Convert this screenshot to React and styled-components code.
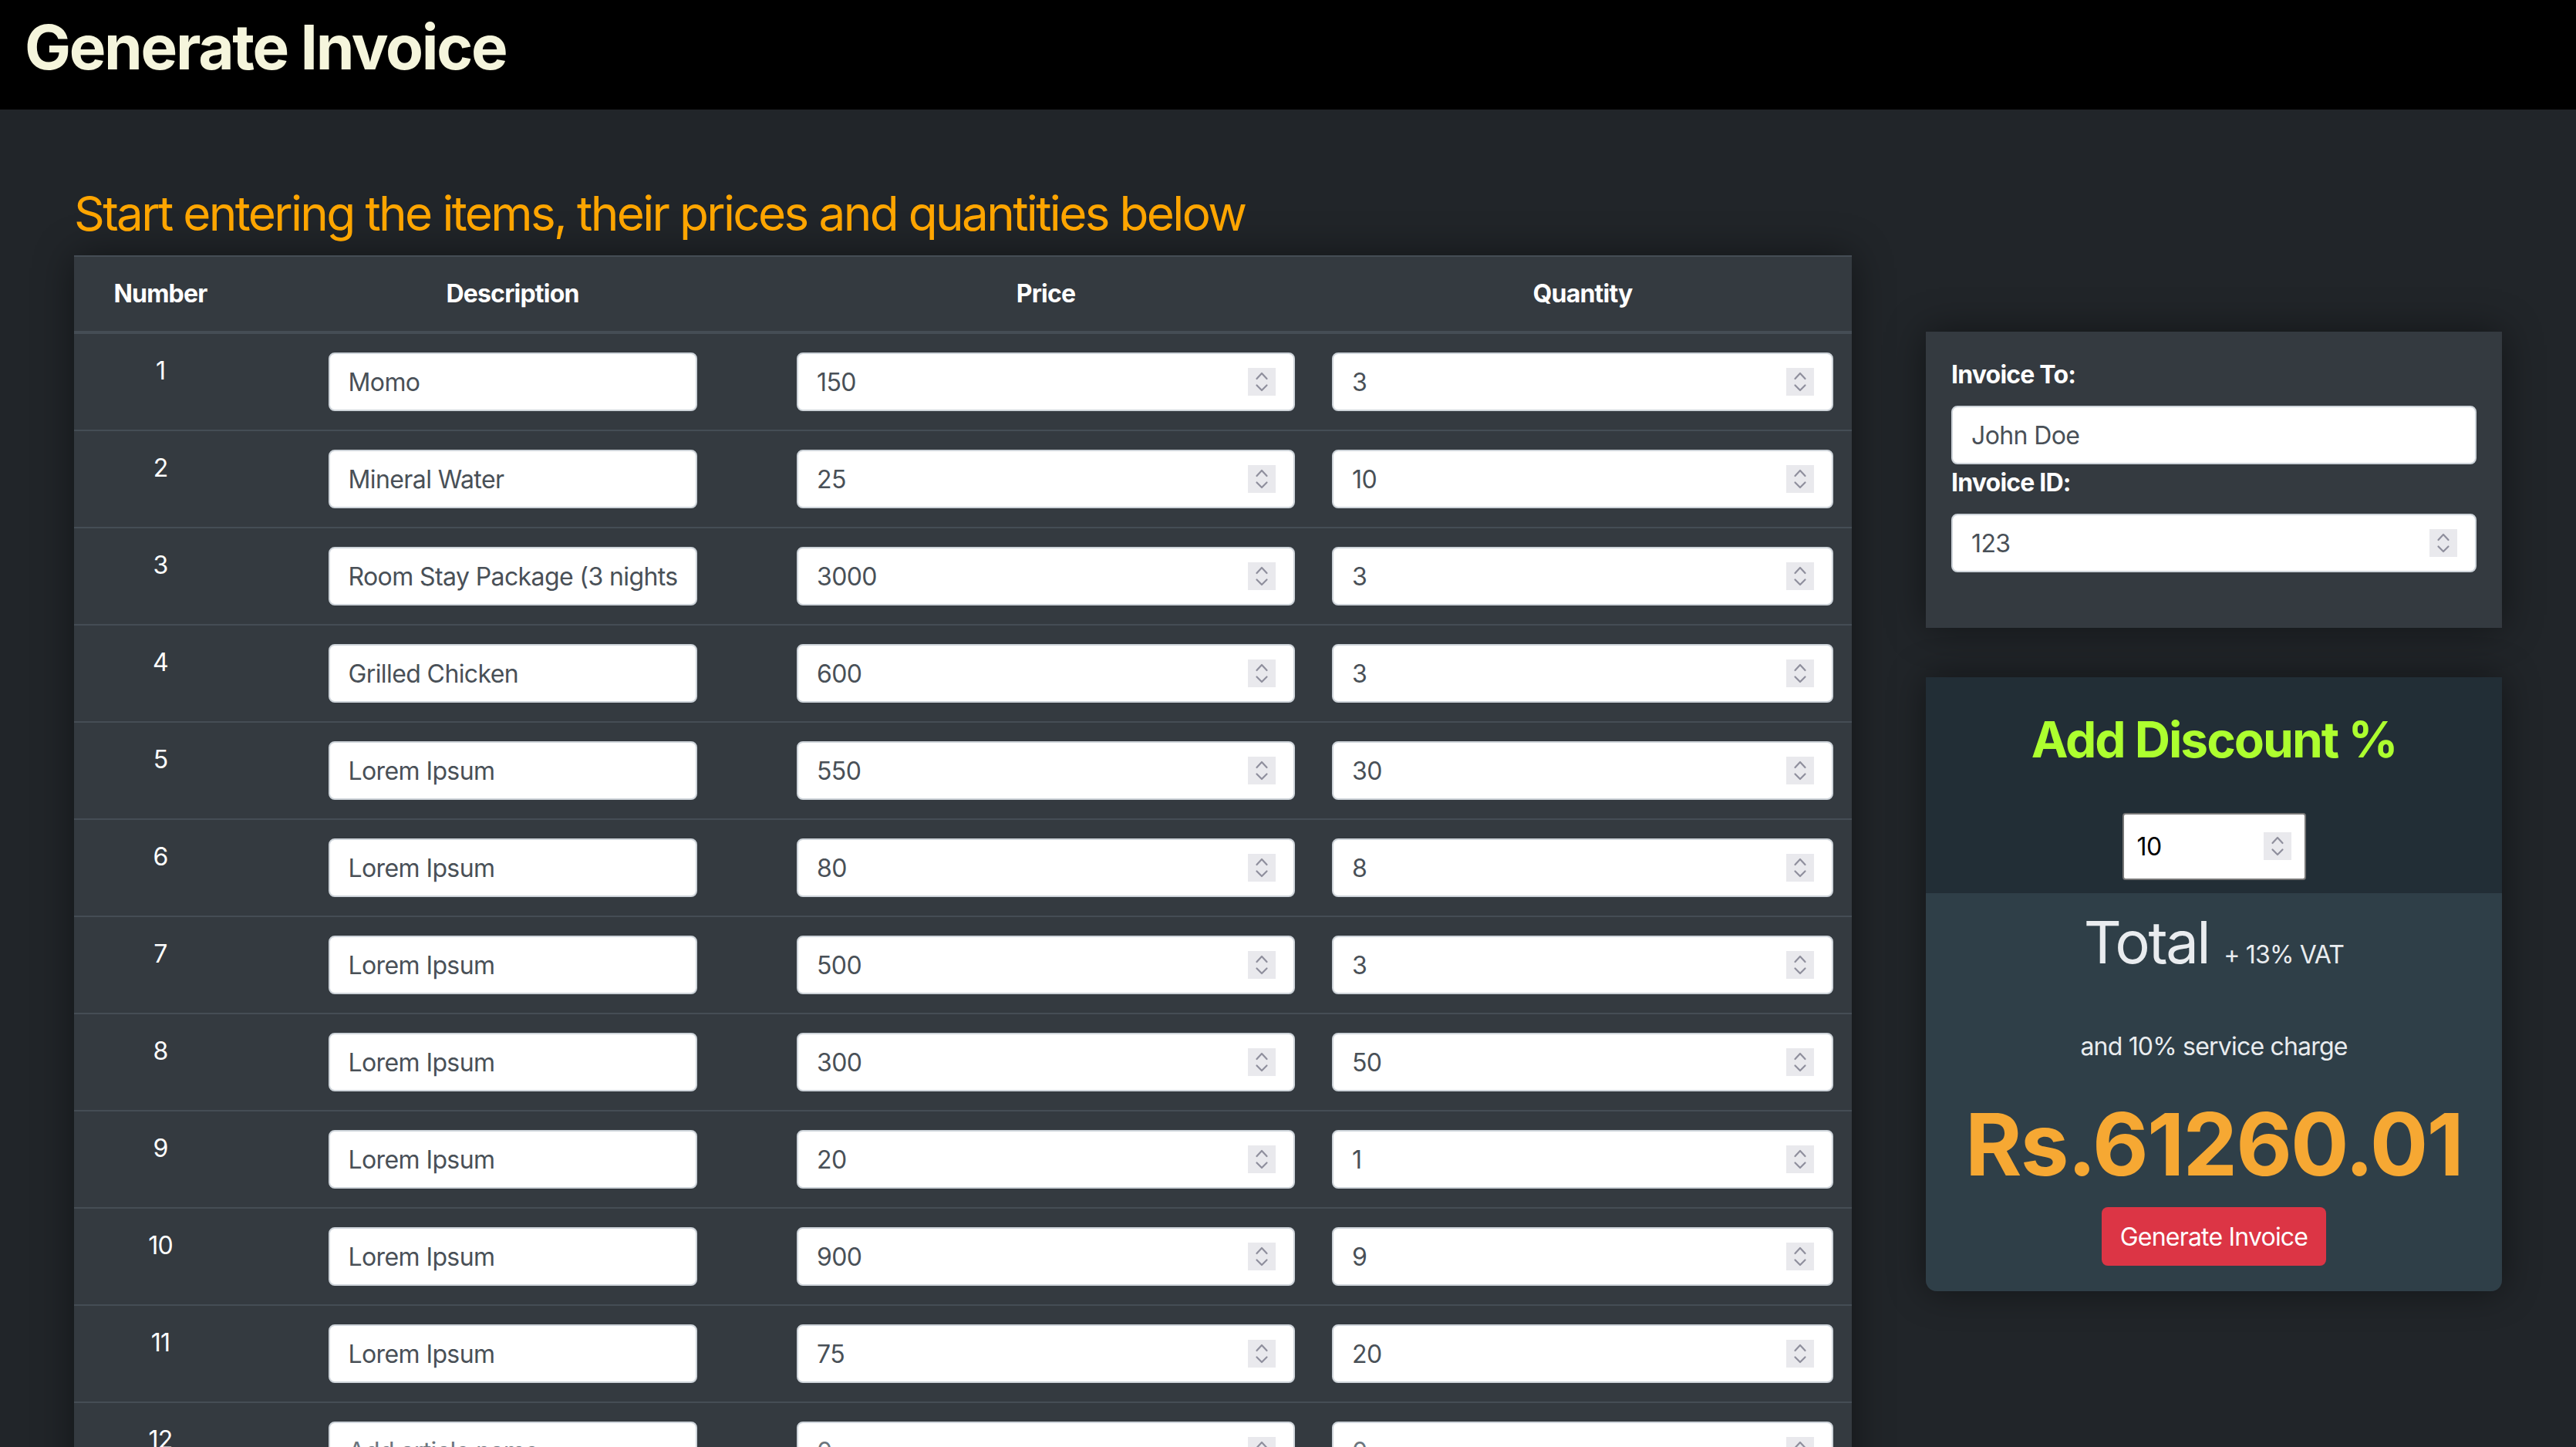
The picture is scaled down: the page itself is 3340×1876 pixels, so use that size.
import React from 'react'
import styled, { createGlobalStyle } from 'styled-components';

const GlobalStyle = createGlobalStyle`
  body {
    margin : 0;
    background : #212529;
    font-family : Inter, "Noto Sans", sans-serif;
    color : #fff;
    letter-spacing : -0.8px;
  }
`;

const items = [
  { id: 1, name: 'Momo', price: '150', qty: '3' },
  { id: 2, name: 'Mineral Water', price: '25', qty: '10' },
  { id: 3, name: 'Room Stay Package (3 nights)', price: '3000', qty: '3' },
  { id: 4, name: 'Grilled Chicken', price: '600', qty: '3' },
  { id: 5, name: 'Lorem Ipsum', price: '550', qty: '30' },
  { id: 6, name: 'Lorem Ipsum', price: '80', qty: '8' },
  { id: 7, name: 'Lorem Ipsum', price: '500', qty: '3' },
  { id: 8, name: 'Lorem Ipsum', price: '300', qty: '50' },
  { id: 9, name: 'Lorem Ipsum', price: '20', qty: '1' },
  { id: 10, name: 'Lorem Ipsum', price: '900', qty: '9' },
  { id: 11, name: 'Lorem Ipsum', price: '75', qty: '20' },
  { id: 12, name: '', price: '', qty: '' },
];

const Header = styled.header`
  background : #000;
  height : 142px;
  box-sizing : border-box;
  padding : 13px 32px 0;
`;

const Title = styled.h1`
  margin : 0;
  font-size : 80px;
  line-height : 1.2;
  font-weight : 700;
  color : #f5f5dc;
  letter-spacing : -2.3px;
`;

const Main = styled.main`
  display : flex;
  align-items : flex-start;
  gap : 96px;
  padding : 0 96px;
`;

const LeftCol = styled.section`
  flex : 0 0 2305px;
`;

const Subtitle = styled.h2`
  margin : 97px 0 16px;
  font-size : 62px;
  line-height : 76px;
  font-weight : 400;
  color : #ffa500;
  letter-spacing : -2.65px;
`;

const Table = styled.div`
  background : #343a40;
  border-top : 2px solid #454d55;
  box-shadow : 0 0 48px rgba(0, 0, 0, 0.45);
`;

const Row = styled.div`
  display : grid;
  grid-template-columns : 224px 689px 694px 698px;
  border-top : ${p => (p.$first ? 'none' : '2px solid #454d55')};
  border-bottom : ${p => (p.$head ? '4px solid #454d55' : 'none')};
`;

const Th = styled.div`
  padding : 24px;
  font-size : 32px;
  line-height : 48px;
  font-weight : 700;
  text-align : center;
`;

const Td = styled.div`
  padding : 24px;
  font-size : 32px;
  line-height : 48px;
  text-align : center;
  display : flex;
  justify-content : center;
  align-items : flex-start;
`;

const Field = styled.label`
  display : flex;
  align-items : center;
  box-sizing : border-box;
  width : ${p => p.$width || '100%'};
  height : 76px;
  background : #fff;
  border : 2px solid #ced4da;
  border-radius : 8px;
  padding : 0 ${p => (p.$spin ? '23px' : '24px')} 0 24px;
`;

const Input = styled.input`
  flex : 1;
  min-width : 0;
  border : none;
  outline : none;
  background : transparent;
  padding : 0;
  font-family : inherit;
  font-size : 32px;
  letter-spacing : -0.6px;
  color : ${p => p.$color || '#495057'};

  &::placeholder {
    color : #6c757d;
  }
`;

const SpinBox = styled.span`
  flex : 0 0 36px;
  height : 36px;
  background : #e9e9ed;
  display : block;
`;

const Spinner = () => (
  <SpinBox>
    <svg width="36" height="36" viewBox="0 0 36 36" fill="none" stroke="#8f8f9d" strokeWidth="2.2" strokeLinecap="round" strokeLinejoin="round">
      <polyline points="11.5,14 18,7 24.5,14" />
      <polyline points="11.5,22.5 18,29 24.5,22.5" />
    </svg>
  </SpinBox>
);

const RightCol = styled.aside`
  flex : 0 0 747px;
  display : flex;
  flex-direction : column;
  gap : 64px;
  padding-top : 288px;
`;

const InfoCard = styled.div`
  background : #343a40;
  padding : 32px 33px 72px;
  box-shadow : 0 0 48px rgba(0, 0, 0, 0.45);
`;

const Label = styled.div`
  font-size : 32px;
  line-height : 48px;
  font-weight : 700;
  margin-bottom : 16px;
`;

const TotalCard = styled.div`
  border-radius : 0 0 14px 14px;
  overflow : hidden;
  box-shadow : 0 0 48px rgba(0, 0, 0, 0.45);
`;

const DiscountPart = styled.div`
  background : #222e36;
  padding : 43px 0 17px;
  display : flex;
  flex-direction : column;
  align-items : center;
`;

const DiscountTitle = styled.h2`
  margin : 0 0 56px;
  font-size : 64px;
  line-height : 1.2;
  font-weight : 700;
  color : #adff2f;
  letter-spacing : -2px;
`;

const DiscountField = styled.label`
  display : flex;
  align-items : center;
  box-sizing : border-box;
  width : 238px;
  height : 87px;
  background : #fff;
  border : 2px solid #767676;
  border-radius : 4px;
  padding : 0 17px;
`;

const SumPart = styled.div`
  background : #2f3f48;
  padding : 15px 0 33px;
  display : flex;
  flex-direction : column;
  align-items : center;
  color : #e9ecef;
`;

const TotalLine = styled.div`
  font-size : 76px;
  line-height : 96px;
  letter-spacing : -2.5px;
`;

const Small = styled.span`
  font-size : 32px;
  letter-spacing : -0.8px;
`;

const Note = styled.p`
  margin : 47px 0 0;
  font-size : 32px;
  line-height : 48px;
`;

const Amount = styled.div`
  margin-top : 35px;
  font-size : 112px;
  line-height : 1.2;
  font-weight : 700;
  color : #f6a833;
  letter-spacing : -1.8px;
`;

const Button = styled.button`
  margin-top : 15px;
  height : 76px;
  padding : 0 24px;
  border : none;
  border-radius : 8px;
  background : #dc3545;
  color : #fff;
  font-family : inherit;
  font-size : 32px;
  letter-spacing : -0.8px;
`;

export default function App() {
  return (
    <>
      <GlobalStyle />
      <Header>
        <Title>Generate Invoice</Title>
      </Header>
      <Main>
        <LeftCol>
          <Subtitle>Start entering the items, their prices and quantities below</Subtitle>
          <Table>
            <Row $first $head>
              <Th>Number</Th>
              <Th>Description</Th>
              <Th>Price</Th>
              <Th>Quantity</Th>
            </Row>
            {items.map((item, i) => (
              <Row key={item.id} $first={i === 0}>
                <Td>{item.id}</Td>
                <Td>
                  <Field $width="478px">
                    <Input defaultValue={item.name} placeholder="Add article name" />
                  </Field>
                </Td>
                <Td>
                  <Field $spin>
                    <Input defaultValue={item.price} placeholder="0" />
                    <Spinner />
                  </Field>
                </Td>
                <Td>
                  <Field $spin>
                    <Input defaultValue={item.qty} placeholder="0" />
                    <Spinner />
                  </Field>
                </Td>
              </Row>
            ))}
          </Table>
        </LeftCol>
        <RightCol>
          <InfoCard>
            <Label>Invoice To:</Label>
            <Field>
              <Input defaultValue="John Doe" />
            </Field>
            <Label>Invoice ID:</Label>
            <Field $spin>
              <Input defaultValue="123" />
              <Spinner />
            </Field>
          </InfoCard>
          <TotalCard>
            <DiscountPart>
              <DiscountTitle>Add Discount %</DiscountTitle>
              <DiscountField>
                <Input defaultValue="10" $color="#000" />
                <Spinner />
              </DiscountField>
            </DiscountPart>
            <SumPart>
              <TotalLine>Total <Small>+ 13% VAT</Small></TotalLine>
              <Note>and 10% service charge</Note>
              <Amount>Rs.61260.01</Amount>
              <Button>Generate Invoice</Button>
            </SumPart>
          </TotalCard>
        </RightCol>
      </Main>
    </>
  );
}
